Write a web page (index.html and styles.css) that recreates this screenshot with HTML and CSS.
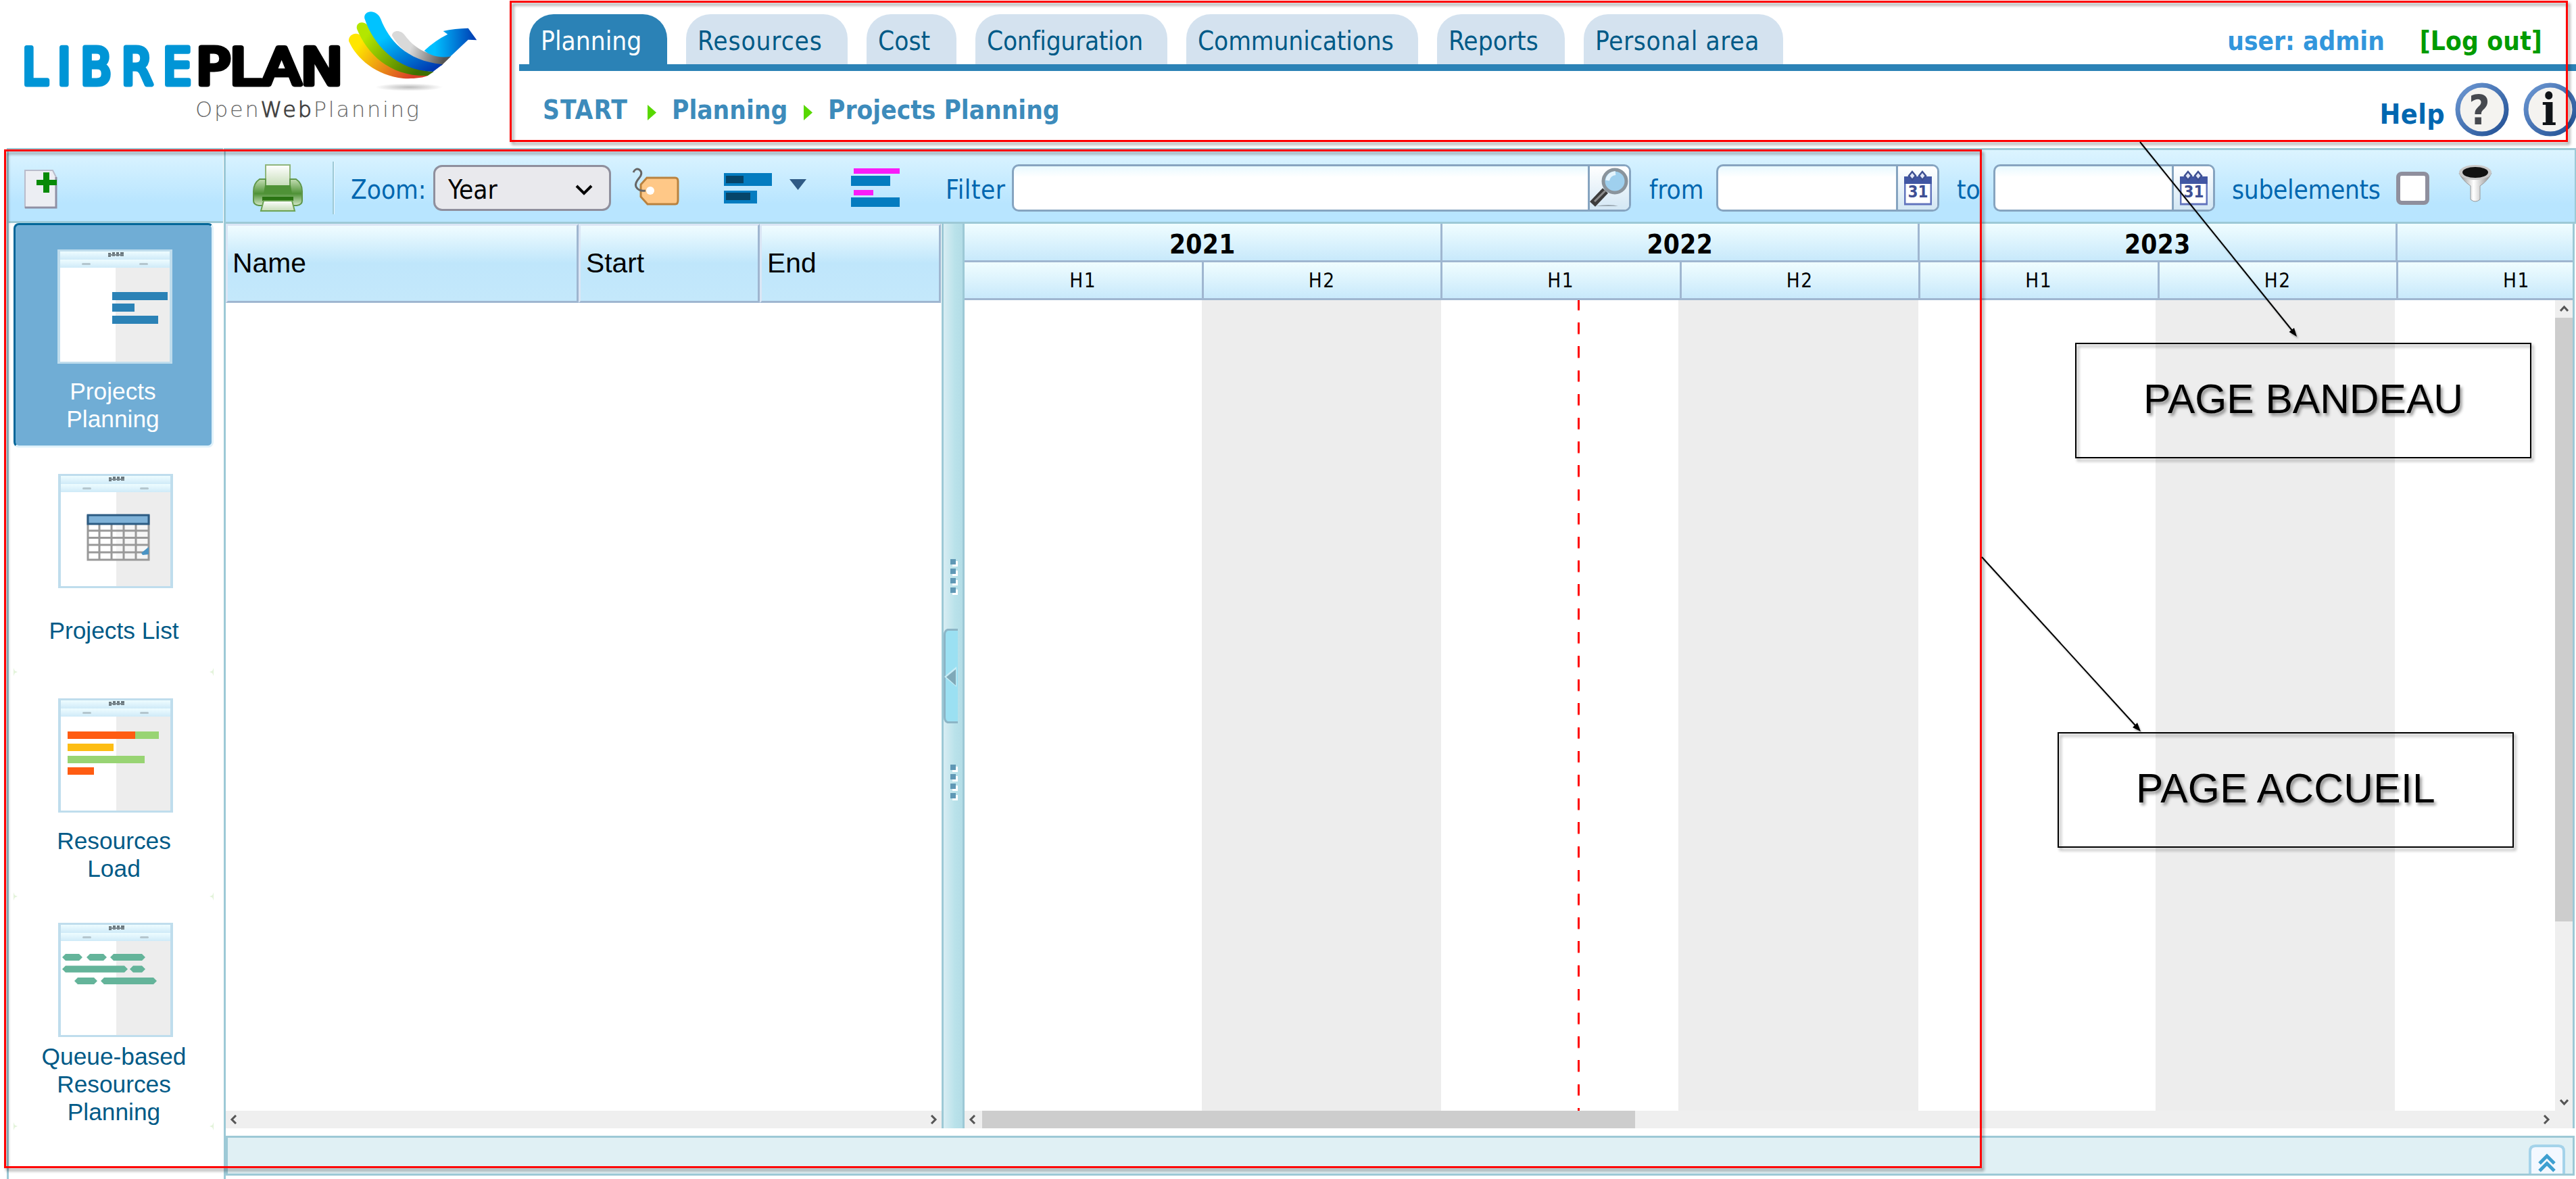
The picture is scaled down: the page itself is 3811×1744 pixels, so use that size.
FILE: index.html
```html
<!DOCTYPE html>
<html lang="en">
<head>
<meta charset="utf-8">
<title>LibrePlan</title>
<link rel="stylesheet" href="styles.css">
</head>
<body>
<svg class="defs" width="0" height="0">
  <defs>
    <linearGradient id="cyan" x1="0.25" y1="0" x2="0.95" y2="0.9"><stop offset="0.3" stop-color="#00c3ff"/><stop offset="1" stop-color="#0038b0"/></linearGradient>
    <linearGradient id="green" x1="0" y1="0" x2="1" y2="0.5"><stop offset="0.2" stop-color="#b3e600"/><stop offset="1" stop-color="#3f6f00"/></linearGradient>
    <linearGradient id="yellow" x1="0" y1="0" x2="1" y2="0.4"><stop offset="0.2" stop-color="#ffe600"/><stop offset="1" stop-color="#d8402a"/></linearGradient>
    <linearGradient id="gray" x1="0" y1="0" x2="1" y2="0.2"><stop offset="0.4" stop-color="#d9d9d9"/><stop offset="1" stop-color="#555"/></linearGradient>
    <linearGradient id="arrow"><stop offset="0.2" stop-color="#00bfff"/><stop offset="1" stop-color="#0038b0"/></linearGradient>
    <radialGradient id="shade"><stop offset="0" stop-color="#bbb"/><stop offset="1" stop-color="#bbb" stop-opacity="0"/></radialGradient>
    <linearGradient id="head" x2="0" y2="1"><stop offset="0" stop-color="#eefcff"/><stop offset="1" stop-color="#cfeaf8"/></linearGradient>
    <linearGradient id="ring" x2="1" y2="1"><stop offset="0" stop-color="#6d98d3"/><stop offset="1" stop-color="#214f93"/></linearGradient>
    <linearGradient id="paper" x2="0" y2="1"><stop offset="0" stop-color="#fff"/><stop offset="1" stop-color="#c5dcb6"/></linearGradient>
    <linearGradient id="body" x2="0" y2="1"><stop offset="0" stop-color="#c4deb4"/><stop offset="0.55" stop-color="#4f9236"/><stop offset="1" stop-color="#d5e8ca"/></linearGradient>
    <linearGradient id="metal"><stop offset="0" stop-color="#888"/><stop offset="0.45" stop-color="#fff"/><stop offset="1" stop-color="#888"/></linearGradient>
    <g id="sheet">
      <rect width="170" height="169" fill="#bfdded"/>
      <rect x="4" y="3" width="162" height="12" fill="url(#head)"/>
      <rect x="4" y="15" width="162" height="12" fill="url(#head)"/>
      <path d="M75 5h4v6h-4zM81 4h4v6h-4zM87 4h4v6h-4zM93 4h5v6h-5z" fill="#6a777d"/>
      <path d="M75 7h23v2H75z" fill="#7d8a90"/>
      <rect x="36" y="20" width="13" height="3" rx="1.500" fill="#b4c6ce"/>
      <rect x="121" y="20" width="13" height="3" rx="1.500" fill="#b4c6ce"/>
      <rect x="4" y="27" width="82" height="139" fill="#fff"/>
      <rect x="86" y="27" width="80" height="139" fill="#ededed"/>
    </g>
    <g id="cal">
      <path d="M1 12h39v38H1z" fill="#fff" stroke="#6274bd" stroke-width="3"/>
      <path d="M0 9h41v11H0z" fill="#4156a3"/>
      <path d="M12 2l5 6-5 6-5-6zM27 2l5 6-5 6-5-6z" fill="#dfe4f6" stroke="#3d4f92" stroke-width="2.5"/>
      <text x="20.500" y="40" text-anchor="middle" class="cal-day">31</text>
    </g>
  </defs>
</svg>

<header class="banner">
  <svg class="logo" width="768" height="219" viewBox="0 0 768 219">
    <text class="logo-name logo-libre" x="33" y="125" textLength="250">LIBRE</text>
    <text class="logo-name logo-plan" x="290" y="125" textLength="217" lengthAdjust="spacingAndGlyphs">PLAN</text>
    <g transform="scale(0.33333) translate(1500 0)">
      <ellipse cx="315" cy="387" rx="150" ry="17" fill="url(#shade)"/>
      <path d="M48 182C46 152 84 140 100 158C150 260 280 335 402 334C380 348 320 350 290 348C170 335 82 260 48 182Z" fill="url(#yellow)"/>
      <path d="M84 128C78 98 112 90 132 112C190 240 300 310 425 318L398 336C230 340 130 240 84 128Z" fill="url(#green)"/>
      <path d="M240 158C240 134 278 128 298 158C335 206 390 252 502 250L460 290C370 278 290 245 240 158Z" fill="url(#gray)"/>
      <path d="M118 82C112 45 172 38 190 85C225 175 300 270 465 286L422 318C260 315 155 195 118 82Z" fill="url(#cyan)"/>
      <path d="M383 225Q430 180 487 152L467 138C500 130 540 126 578 125L616 178L578 176L500 250C460 260 410 248 383 225Z" fill="url(#arrow)"/>
    </g>
    <text class="logo-tag" x="289" y="173" textLength="331">Open<tspan class="logo-web">Web</tspan>Planning</text>
  </svg>
  <div class="banner-main">
    <nav class="tabs">
      <a class="tab tab-planning active">Planning</a>
      <a class="tab tab-resources">Resources</a>
      <a class="tab tab-cost">Cost</a>
      <a class="tab tab-configuration">Configuration</a>
      <a class="tab tab-communications">Communications</a>
      <a class="tab tab-reports">Reports</a>
      <a class="tab tab-personal">Personal area</a>
      <div class="session"><span class="user">user: admin</span><span class="logout">[Log out]</span></div>
    </nav>
    <div class="subbar">
      <span class="crumb crumb-start">START</span>
      <svg class="crumb-arrow" width="13" height="23" viewBox="0 0 13 23"><path d="M0 0L13 11.500L0 23Z" fill="#58d800"/></svg>
      <span class="crumb crumb-planning">Planning</span>
      <svg class="crumb-arrow" width="13" height="23" viewBox="0 0 13 23"><path d="M0 0L13 11.500L0 23Z" fill="#58d800"/></svg>
      <span class="crumb">Projects Planning</span>
      <span class="help">Help</span>
      <svg class="round" width="80" height="80" viewBox="0 0 80 80"><circle cx="40" cy="40" r="36" fill="#f4f3f0" stroke="url(#ring)" stroke-width="7"/><text class="round-q" x="36" y="62" text-anchor="middle">?</text></svg>
      <svg class="round round-info" width="78" height="80" viewBox="0 0 78 80"><circle cx="40" cy="40" r="36" fill="#f4f3f0" stroke="url(#ring)" stroke-width="7"/><text class="round-i" x="38" y="63" text-anchor="middle">i</text></svg>
    </div>
  </div>
</header>

<div class="app">
  <aside class="side">
    <div class="side-tools">
      <svg width="50" height="60" viewBox="0 0 50 60"><path d="M1 2H42L47 12V57H1Z" fill="#eceef3" stroke="#b9bccb" stroke-width="2"/><path d="M1 57H47V12" fill="none" stroke="#8f90a4" stroke-width="3"/><path d="M28 5h9v11h11v8H37v11h-9V24H18v-8h10z" fill="#078a07"/></svg>
    </div>
    <div class="persp active">
      <svg width="170" height="169" viewBox="0 0 170 169"><use href="#sheet"/><path d="M81 63h82v12H81zM81 80h33v12H81zM81 98h68v12H81z" fill="#2b82b6"/></svg>
      <div class="persp-label">Projects<br>Planning</div>
    </div>
    <div class="persp">
      <svg width="170" height="169" viewBox="0 0 170 169"><use href="#sheet"/><rect x="44" y="61" width="90" height="66" fill="#fff" fill-opacity="0.500"/><path d="M44 61V127H134V61M61 75V127M79 75V127M97 75V127M115 75V127M44 84H134M44 94.500H134M44 105H134M44 116H134" fill="none" stroke="#999" stroke-width="3"/><rect x="44" y="61" width="90" height="13" fill="#7fb2d8" stroke="#2c5b82" stroke-width="3"/><path d="M123 117L134 108V119L125 120Z" fill="#4b94c4"/></svg>
      <div class="persp-label">Projects List</div>
    </div>
    <div class="persp">
      <svg width="170" height="169" viewBox="0 0 170 169"><use href="#sheet"/><path d="M14 49h100v11H14zM14 102h39v11H14z" fill="#ff5c12"/><path d="M114 49h35v11h-35zM14 85h114v11H14z" fill="#98d473"/><path d="M14 67h68v11H14z" fill="#fdbd14"/></svg>
      <div class="persp-label">Resources<br>Load</div>
    </div>
    <div class="persp persp-last">
      <svg width="170" height="169" viewBox="0 0 170 169"><use href="#sheet"/><path d="M6 51l5-5h20l5 5-5 5H11zM42 51l5-5h20l5 5-5 5H47zM77 51l5-5h42l5 5-5 5H82zM6 68.500l5-5h87l5 5-5 5H11zM106 68.500l5-5h13l5 5-5 5h-13zM24 86l5-5h24l5 5-5 5H29zM63 86l5-5h73l5 5-5 5H68z" fill="#64b49a"/></svg>
      <div class="persp-label persp-label-long">Queue-based<br>Resources<br>Planning</div>
    </div>
  </aside>

  <main class="main">
    <div class="toolbar">
      <svg class="t-print" width="74" height="70" viewBox="0 0 74 70"><rect x="19" y="1" width="36" height="32" fill="url(#paper)" stroke="#8fb57b" stroke-width="2"/><path d="M10 22H19V32H55V22H64Q73 28 73 40V54Q73 60 65 61H9Q1 60 1 54V40Q1 28 10 22Z" fill="url(#body)" stroke="#5f974a" stroke-width="2"/><path d="M18 31H56L58 44H16Z" fill="#4f9236"/><path d="M14 48H60V54H14Z" fill="#2a7412"/><path d="M16 54H58L62 69H12Z" fill="url(#paper)" stroke="#6ba352" stroke-width="2"/></svg>
      <span class="t-sep"></span>
      <span class="t-label t-zoom">Zoom:</span>
      <span class="select">Year<svg width="26" height="17" viewBox="0 0 26 17"><path d="M2 3L13 14L24 3" fill="none" stroke="#000" stroke-width="4"/></svg></span>
      <svg class="t-tag" width="70" height="56" viewBox="0 0 70 56"><path d="M22 15H64Q68 15 68 20V48Q68 54 64 54H23L13 43V25Z" fill="#ffc887" stroke="#b9823f" stroke-width="3"/><circle cx="27" cy="34" r="6" fill="#fff"/><path d="M2 7Q5 0 11 3Q17 8 10 16Q2 26 8 31Q12 35 20 34" fill="none" stroke="#666" stroke-width="3"/></svg>
      <svg class="t-bars" width="71" height="45" viewBox="0 0 71 45"><path d="M0 0h71v19H0zM0 26h49v19H0z" fill="#047cc0"/><path d="M3 4h26v11H3zM3 29h36v11H3z" fill="#064569"/></svg>
      <svg class="t-drop" width="25" height="16" viewBox="0 0 25 16"><path d="M0 0H25L12.500 16Z" fill="#2f5a85"/></svg>
      <svg class="t-crit" width="72" height="57" viewBox="0 0 72 57"><path d="M4 0h68v8H4zM4 32h29v8H4z" fill="#f81cf8"/><path d="M0 11h58v15H0zM0 43h72v14H0z" fill="#047cc0"/></svg>
      <span class="t-label t-filter">Filter</span>
      <span class="field field-filter"><span class="field-btn"><svg width="58" height="62" viewBox="0 0 58 62"><path d="M8 58Q30 54 42 58Z" fill="#9aa7b0"/><path d="M4 55L23 35" stroke="#3c3c3c" stroke-width="11"/><path d="M7 51L23 35" stroke="#8c8c8c" stroke-width="3"/><circle cx="37" cy="21" r="17" fill="#9fd0ee" stroke="#8a949c" stroke-width="5"/><path d="M26 20Q28 10 38 9" fill="none" stroke="#e4f4fd" stroke-width="6"/></svg></span></span>
      <span class="t-label t-from">from</span>
      <span class="field field-date"><span class="field-btn"><svg width="41" height="53" viewBox="0 0 41 53"><use href="#cal"/></svg></span></span>
      <span class="t-label t-to">to</span>
      <span class="field field-date field-to"><span class="field-btn"><svg width="41" height="53" viewBox="0 0 41 53"><use href="#cal"/></svg></span></span>
      <span class="t-label t-sub">subelements</span>
      <span class="check"></span>
      <svg class="t-funnel" width="50" height="56" viewBox="0 0 50 56"><path d="M1 13Q6 24 18 32V52Q25 58 32 52V32Q44 24 49 13Z" fill="url(#metal)" stroke="#999" stroke-width="1"/><ellipse cx="25" cy="12" rx="24" ry="11" fill="#c8c8c8"/><ellipse cx="25" cy="12" rx="19" ry="8" fill="#111"/></svg>
    </div>

    <div class="panes">
      <section class="tree">
        <div class="tree-head"><div class="th th-name">Name</div><div class="th th-start">Start</div><div class="th th-end">End</div></div>
        <div class="tree-body"></div>
        <div class="hscroll"><svg width="11" height="14" viewBox="0 0 11 14"><path d="M9 1L3 7L9 13" fill="none" stroke="#555" stroke-width="3"/></svg><svg width="11" height="14" viewBox="0 0 11 14"><path d="M2 1L8 7L2 13" fill="none" stroke="#555" stroke-width="3"/></svg></div>
      </section>

      <div class="splitter">
        <div class="grip"><i></i><i></i><i></i><i></i></div>
        <svg class="collapse" width="21" height="140" viewBox="0 0 21 140"><path d="M21 1.500H6Q1.500 3 1.500 9V131Q1.500 137 6 138.500H21" fill="#9be0f2" stroke="#8cb5c6" stroke-width="3"/><path d="M19 56L1 71L19 86Z" fill="#c8edf6"/><path d="M18 60L4 71.500L18 84Z" fill="#7fa9b8"/></svg>
        <div class="grip"><i></i><i></i><i></i><i></i></div>
      </div>

      <section class="gantt">
        <div class="years"><div class="yr">2021</div><div class="yr">2022</div><div class="yr">2023</div><div class="yr yr-cut"></div></div>
        <div class="halves"><div class="hf">H1</div><div class="hf">H2</div><div class="hf">H1</div><div class="hf">H2</div><div class="hf">H1</div><div class="hf">H2</div><div class="hf hf-cut">H1</div></div>
        <div class="gantt-mid">
          <div class="canvas"><div class="today"></div></div>
          <div class="vscroll">
            <svg width="13" height="11" viewBox="0 0 13 11"><path d="M1 9L6.500 3L12 9" fill="none" stroke="#555" stroke-width="3"/></svg>
            <div class="vthumb"></div>
            <svg width="13" height="11" viewBox="0 0 13 11"><path d="M1 2L6.500 8L12 2" fill="none" stroke="#555" stroke-width="3"/></svg>
          </div>
        </div>
        <div class="hscroll hscroll-gantt"><svg width="11" height="14" viewBox="0 0 11 14"><path d="M9 1L3 7L9 13" fill="none" stroke="#555" stroke-width="3"/></svg><div class="hthumb"></div><svg width="11" height="14" viewBox="0 0 11 14"><path d="M2 1L8 7L2 13" fill="none" stroke="#555" stroke-width="3"/></svg></div>
      </section>
    </div>

    <footer class="south">
      <svg width="54" height="43" viewBox="0 0 54 43"><path d="M2 43V10Q2 2 10 2H44Q52 2 52 10V43" fill="#f3f8ff" stroke="#a4d3ea" stroke-width="4"/><path d="M16 28L27 17L38 28M16 39L27 28L38 39" fill="none" stroke="#3e9fd0" stroke-width="5"/></svg>
    </footer>
  </main>
</div>

<div class="frame frame-banner"></div>
<div class="frame frame-home"></div>
<svg class="pointers" width="3811" height="1744" viewBox="0 0 3811 1744">
  <path d="M3166 210L3392 490M2932 824L3160 1074" fill="none" stroke="#000" stroke-width="2"/>
  <path d="M3398 498L3386.500 491L3394 485ZM3167 1082L3155 1076L3162 1069Z"/>
</svg>
<div class="callout callout-banner">PAGE BANDEAU</div>
<div class="callout callout-home">PAGE ACCUEIL</div>
</body>
</html>
```
FILE: styles.css
```css
* { box-sizing: border-box; }
body {
  position: relative;
  margin: 0;
  width: 3811px;
  height: 1744px;
  overflow: hidden;
  background: #fff;
  font: 38.5px "DejaVu Sans Condensed", "DejaVu Sans", sans-serif;
  color: #000;
}
svg { display: block; flex: none; }
.defs { position: absolute; }

/* banner */
.banner { display: flex; height: 219px; }
.logo-name { font: 74px "DejaVu Sans Condensed", sans-serif; stroke-width: 7px; stroke-linejoin: round; }
.logo-libre { fill: #0095d6; stroke: #0095d6; }
.logo-plan { fill: #000; stroke: #000; }
.logo-tag { font: 200 32px "DejaVu Sans Light", "DejaVu Sans", sans-serif; fill: #666; }
.logo-web { font-weight: bold; fill: #444; }
.banner-main { flex: 1; display: flex; flex-direction: column; min-width: 0; }
.tabs {
  display: flex;
  align-items: flex-end;
  gap: 28px;
  height: 105px;
  padding-left: 15px;
  border-bottom: 10px solid #2b82b6;
}
.tab {
  height: 74px;
  padding: 5px 0 0 17px;
  line-height: 69px;
  border-radius: 36px 36px 0 0;
  background: #d4e2ef;
  color: #005a87;
  white-space: nowrap;
}
.tab.active { background: #2b82b6; color: #fff; }
.tab-planning { width: 204px; }
.tab-resources { width: 239px; letter-spacing: .9px; }
.tab-cost { width: 133px; }
.tab-configuration { width: 284px; letter-spacing: -.3px; }
.tab-communications { width: 343px; letter-spacing: -.1px; }
.tab-reports { width: 189px; }
.tab-personal { width: 295px; letter-spacing: .6px; }
.session {
  display: flex;
  gap: 52px;
  height: 74px;
  margin-left: auto;
  padding: 5px 50px 0 0;
  line-height: 69px;
  font-weight: bold;
}
.user { color: #3296dc; }
.logout { color: #009b00; letter-spacing: .2px; }
.subbar { display: flex; align-items: center; height: 114px; padding-left: 35px; color: #3d8bbb; font-weight: bold; }
.crumb { margin-left: 23px; white-space: nowrap; }
.crumb-start { width: 155px; margin-left: 0; letter-spacing: 1px; }
.crumb-arrow { margin-top: 8px; }
.crumb-planning { width: 191px; }
.crumb-planning + .crumb-arrow { margin-left: 4px; }
.help { margin: 14px 15px 0 auto; color: #0067b0; font-size: 41px; letter-spacing: .4px; }
.round-info { margin-left: 21px; }
.round-q { font: bold 60px "DejaVu Sans Condensed", sans-serif; fill: #46494f; }
.round-i { font: bold 66px "DejaVu Serif Condensed", "DejaVu Serif", serif; fill: #101418; }

/* application frame */
.app { display: flex; height: 1525px; }
.side { flex: none; width: 321px; margin-left: 10px; border-left: 3px solid #9dc9d6; }
.side-tools {
  display: flex;
  align-items: center;
  height: 111px;
  width: 317px;
  padding: 10px 0 0 23px;
  border-top: 3px solid #9dc9d6;
  border-bottom: 3px solid #9dc9d6;
  background: linear-gradient(#dcf4ff, #b8e5ff 75%);
}
.persp {
  position: relative;
  display: flex;
  flex-direction: column;
  align-items: center;
  width: 296px;
  height: 332px;
  margin-left: 7px;
  padding: 39px 0 0 6px;
  border-radius: 8px;
  color: #005a87;
}
.persp.active {
  padding: 36px 0 0 3px;
  border: 3px solid #dff1fa;
  border-top-color: #069;
  border-left-color: #069;
  background: #70add5;
  color: #fff;
}
.persp::before, .persp::after {
  content: "";
  position: absolute;
  bottom: -6px;
  left: 0;
  width: 6px;
  height: 12px;
  background: #e3f3da;
  clip-path: polygon(0 0, 30% 35%, 100% 50%, 30% 65%, 0 100%);
}
.persp::after { left: auto; right: 0; transform: scaleX(-1); }
.persp.active::before, .persp.active::after { display: none; }
.persp-last { height: 340px; }
.persp-label {
  display: flex;
  align-items: center;
  height: 132px;
  padding-right: 5px;
  font: 35.3px/41px "Liberation Sans", Arial, sans-serif;
  text-align: center;
}
.persp-label-long { padding-top: 7px; }

.main { flex: 1; display: flex; flex-direction: column; min-width: 0; border-left: 3px solid #9dc9d6; }
.toolbar {
  display: flex;
  align-items: flex-start;
  height: 112px;
  border-top: 3px solid #9dc9d6;
  border-bottom: 3px solid #9dc9d6;
  border-right: 2px solid #9dc9d6;
  background: linear-gradient(#dcf4ff, #b8e5ff 75%);
  color: #0067b0;
}
.toolbar > * { flex: none; }
.t-print { margin: 21px 0 0 40px; }
.t-sep { width: 3px; height: 78px; margin: 17px 0 0 44px; background: #9dc9d6; border-right: 1px solid #e8f8ff; }
.t-label { height: 95px; padding-top: 11px; line-height: 95px; white-space: nowrap; }
.t-zoom { width: 122px; margin-left: 24px; }
.select {
  display: flex;
  align-items: center;
  justify-content: space-between;
  width: 263px;
  height: 68px;
  margin-top: 22px;
  padding: 4px 24px 0 19px;
  border: 3px solid #8f8f9d;
  border-radius: 13px;
  background: #e9e9ed;
  color: #000;
}
.t-tag { margin: 26px 0 0 31px; }
.t-bars { margin: 34px 0 0 66px; }
.t-drop { margin: 43px 0 0 26px; }
.t-crit { margin: 27px 0 0 66px; }
.t-filter { width: 98px; margin-left: 68px; letter-spacing: .5px; }
.field {
  display: flex;
  justify-content: flex-end;
  height: 70px;
  margin-top: 21px;
  border: 3px solid #86a4c0;
  border-radius: 10px;
  background: linear-gradient(#e8f9ff, #fff 25%);
  overflow: hidden;
}
.field-filter { width: 916px; }
.field-btn {
  display: flex;
  align-items: center;
  justify-content: center;
  width: 61px;
  border-left: 3px solid #86a4c0;
  background: linear-gradient(#fff, #d3e7f4);
}
.t-from { width: 99px; margin-left: 27px; }
.field-date { width: 330px; }
.t-to { width: 54px; margin-left: 26px; }
.field-to { width: 328px; }
.t-sub { width: 243px; margin-left: 25px; letter-spacing: -.3px; }
.check { width: 49px; height: 49px; margin-top: 32px; border: 6px solid #8f8f9d; border-radius: 8px; background: #fff; }
.t-funnel { margin: 21px 0 0 43px; }
.cal-day { font: bold 24px "DejaVu Sans Condensed", sans-serif; fill: #3f4f94; }

.panes { display: flex; height: 1338px; margin-right: 2px; border-right: 3px solid #9dc9d6; }
.tree { flex: none; display: flex; flex-direction: column; width: 1059px; }
.tree-head { display: flex; height: 117px; font: 40.8px "Liberation Sans", Arial, sans-serif; }
.th {
  display: flex;
  align-items: center;
  padding-left: 7px;
  border: 3px solid #9fb6d0;
  border-top-color: #dbe6f5;
  border-left-color: #dbe6f5;
  background: linear-gradient(#f0fcff, #bfe6fb 50%, #c4e8fb);
}
.th-name { width: 522px; }
.th-start, .th-end { width: 268px; padding-left: 8px; }
.tree-body { flex: 1; }
.hscroll { display: flex; align-items: center; justify-content: space-between; height: 26px; padding: 0 6px; background: #efefef; }

.splitter {
  flex: none;
  display: flex;
  flex-direction: column;
  align-items: center;
  width: 34px;
  padding-top: 496px;
  border: solid #9dc9d6;
  border-width: 0 3px;
  background: linear-gradient(90deg, #d8edf3, #b9e2ea 60%, #b3dce6);
}
.grip { display: flex; flex-direction: column; gap: 6px; width: 8px; }
.grip i { width: 8px; height: 8px; background: #6098b5; box-shadow: 3px 3px 0 #fff; }
.collapse { align-self: flex-start; margin: 53px 0 61px; }

.gantt { flex: 1; display: flex; flex-direction: column; min-width: 0; }
.years, .halves { display: flex; border-bottom: 3px solid #9fb6d0; background: linear-gradient(#f0fdff, #c8e9fb); }
.years { height: 57px; }
.halves { height: 56px; }
.yr, .hf { flex: none; border-right: 3px solid #9fb6d0; text-align: center; }
.yr { width: 706.5px; padding-top: 6px; line-height: 49px; font-weight: bold; letter-spacing: .3px; }
.hf { width: 353.5px; padding-top: 2px; line-height: 51px; font-size: 29.5px; letter-spacing: 1.5px; }
.yr-cut { flex: 1; border: 0; }
.hf-cut { flex: 1; min-width: 0; padding-left: 92px; border: 0; }
.gantt-mid { flex: 1; display: flex; }
.canvas {
  position: relative;
  flex: 1;
  background: repeating-linear-gradient(90deg, #fff 0 351px, #ededed 351px 705.5px);
}
.today {
  position: absolute;
  left: 907px;
  top: 0;
  bottom: 0;
  width: 3px;
  background: repeating-linear-gradient(#f00 0 16px, transparent 18px 35.2px) 0 -2px;
}
.vscroll { display: flex; flex-direction: column; align-items: center; width: 26px; padding: 7px 0; background: #efefef; }
.vthumb { width: 26px; height: 893px; margin: 8px 0 auto; background: #cdcdcd; }
.hscroll-gantt { justify-content: flex-start; padding: 0 33px 0 6px; }
.hthumb { width: 966px; height: 26px; margin: 0 auto 0 9px; background: #cdcdcd; }

.south {
  display: flex;
  justify-content: flex-end;
  height: 59px;
  margin: 11px 2px 0 0;
  padding: 10px 11px 0 0;
  border: 3px solid #9dc9d6;
  background: #e0f0f4;
}

/* annotations drawn over the page */
.frame { position: absolute; border: 3px solid #f00; filter: drop-shadow(3px 4px 2px rgba(0, 0, 0, .4)); }
.frame-banner { left: 754px; top: 1px; width: 3045px; height: 209px; }
.frame-home { left: 6px; top: 221px; width: 2926px; height: 1507px; }
.pointers { position: absolute; left: 0; top: 0; filter: drop-shadow(2px 3px 1px rgba(0, 0, 0, .25)); }
.callout {
  position: absolute;
  display: flex;
  align-items: center;
  justify-content: center;
  width: 675px;
  height: 171px;
  padding-bottom: 5px;
  border: 2px solid #000;
  font: 60.5px "Liberation Sans", Arial, sans-serif;
  filter: drop-shadow(3px 4px 2px rgba(0, 0, 0, .4));
}
.callout-banner { left: 3070px; top: 507px; }
.callout-home { left: 3044px; top: 1083px; letter-spacing: .3px; }
```
